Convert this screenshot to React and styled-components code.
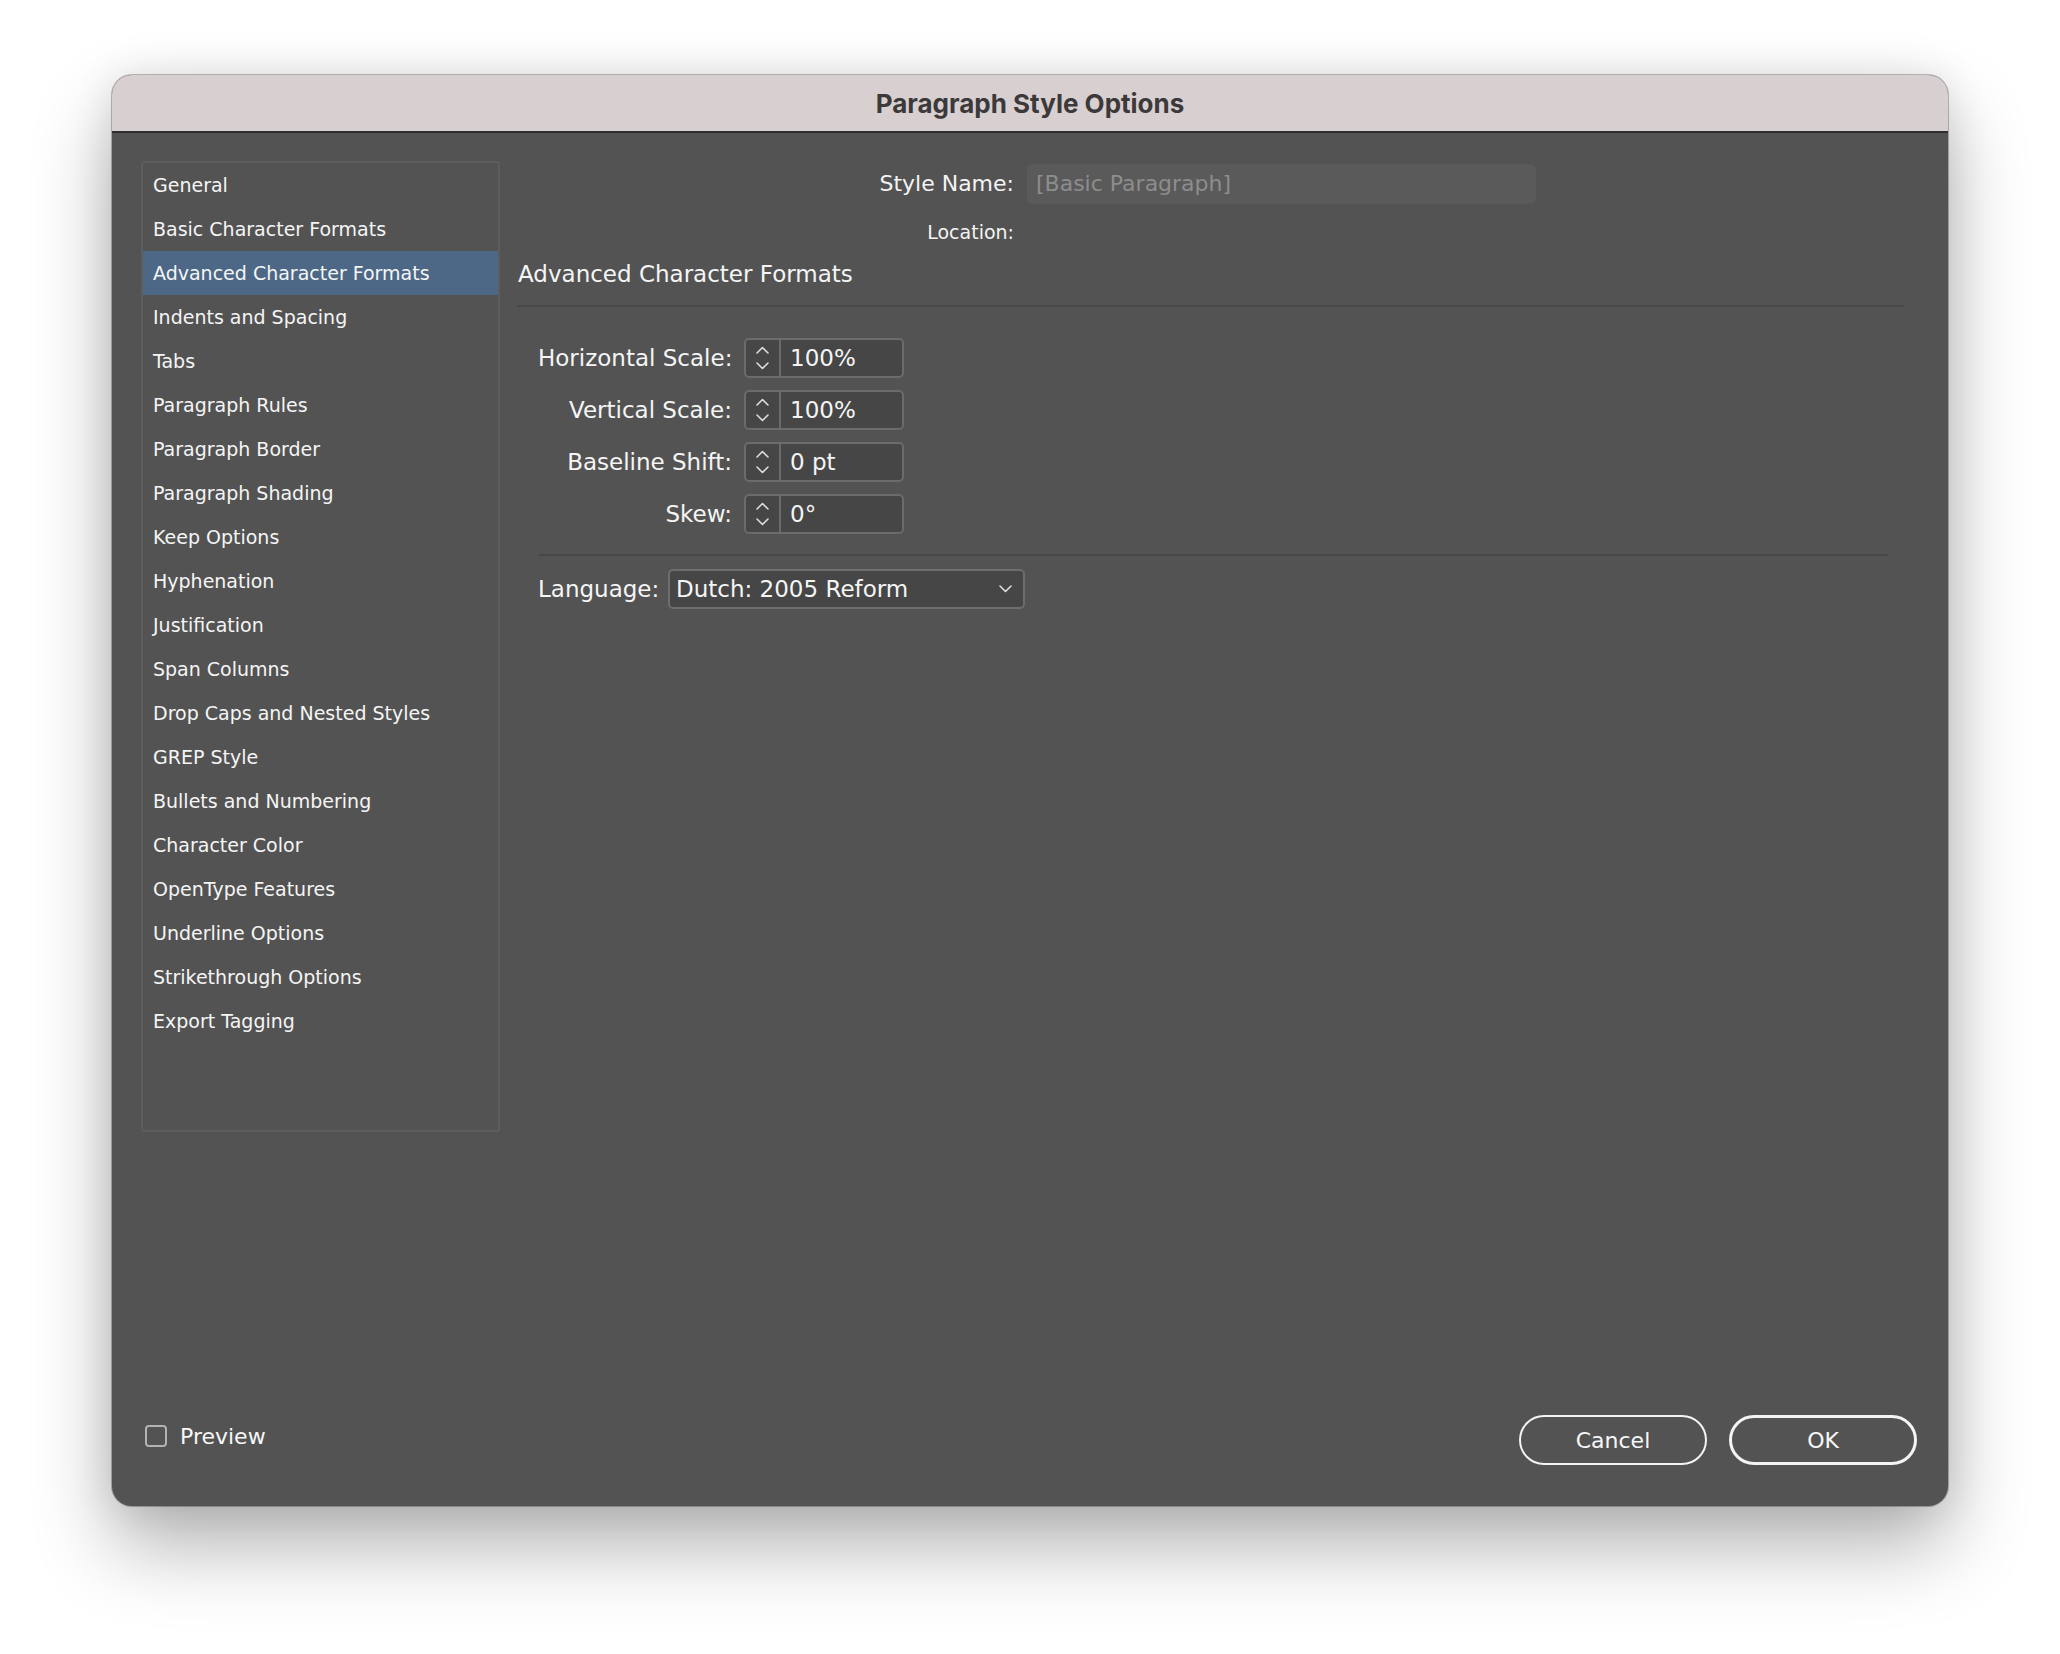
import React from 'react';
import styled, { createGlobalStyle } from 'styled-components';

const GlobalStyle = createGlobalStyle`
    html, body {
        margin: 0;
        padding: 0;
        background: #ffffff;
    }
    body {
        font-family: "DejaVu Sans", "Liberation Sans", sans-serif;
    }
`;

const Desktop = styled.div`
    min-height: 1654px;
    padding: 75px 0 0 112px;
    box-sizing: border-box;
    background: #ffffff;
`;

const Window = styled.div`
    width: 1836px;
    height: 1431px;
    border-radius: 20px;
    overflow: hidden;
    display: flex;
    flex-direction: column;
    background: #535353;
    box-shadow: 0 0 0 1px rgba(0, 0, 0, 0.25), 0 40px 80px rgba(0, 0, 0, 0.3), 0 0 40px rgba(0, 0, 0, 0.1);
`;

const TitleBar = styled.div`
    height: 56px;
    flex-shrink: 0;
    background: #d8cfd0;
    border-bottom: 2px solid #2f2f2f;
    display: flex;
    align-items: center;
    justify-content: center;
    font-family: Inter, "Liberation Sans", sans-serif;
    font-weight: 700;
    font-size: 26px;
    color: #3c393a;
`;

const Body = styled.div`
    flex: 1;
    display: flex;
    flex-direction: column;
    padding: 28px 31px 41px 29px;
`;

const Top = styled.div`
    display: flex;
    gap: 17px;
`;

const Sidebar = styled.ul`
    list-style: none;
    margin: 0;
    padding: 0;
    width: 359px;
    height: 971px;
    flex-shrink: 0;
    box-sizing: border-box;
    border: 2px solid #5d5d5d;
    border-radius: 3px;
`;

const NavItem = styled.li`
    height: 44px;
    line-height: 44px;
    padding-left: 10px;
    font-size: 19px;
    color: #f5f5f5;
    background: ${(p) => (p.$active ? '#4c6886' : 'transparent')};
    white-space: nowrap;
`;

const Main = styled.div`
    flex: 1;
    display: flex;
    flex-direction: column;
`;

const NameGrid = styled.div`
    display: grid;
    grid-template-columns: 497px 509px;
    column-gap: 13px;
    row-gap: 8px;
    margin-top: 3px;
`;

const NameLabel = styled.div`
    text-align: right;
    font-size: ${(p) => (p.$small ? '19px' : '22px')};
    color: #f3f3f3;
    height: 40px;
    line-height: 40px;
`;

const NameInput = styled.div`
    height: 40px;
    line-height: 40px;
    background: #5a5a5a;
    border-radius: 6px;
    padding-left: 9px;
    font-size: 22px;
    color: #8d8d8d;
`;

const Heading = styled.div`
    margin-top: 6px;
    padding-left: 1px;
    height: 32px;
    line-height: 32px;
    font-size: 23px;
    color: #f5f5f5;
`;

const Rule = styled.div`
    height: 2px;
    background: #484848;
    margin: ${(p) => p.$margin};
`;

const FieldGrid = styled.div`
    display: grid;
    grid-template-columns: 194px 160px;
    column-gap: 12px;
    row-gap: 12px;
    margin-top: 31px;
    padding-left: 21px;
    align-items: center;
`;

const FieldLabel = styled.div`
    text-align: ${(p) => (p.$left ? 'left' : 'right')};
    font-size: 23px;
    color: #f5f5f5;
    white-space: nowrap;
`;

const SpinBox = styled.div`
    display: flex;
    height: 40px;
    box-sizing: border-box;
    border: 2px solid #6b6b6b;
    border-radius: 5px;
    background: #464646;
`;

const Stepper = styled.div`
    width: 33px;
    flex-shrink: 0;
    border-right: 2px solid #6b6b6b;
    display: flex;
    flex-direction: column;
    align-items: center;
    justify-content: center;
    gap: 8px;
`;

const SpinValue = styled.div`
    padding-left: 9px;
    line-height: 36px;
    font-size: 23px;
    color: #f5f5f5;
`;

const LangRow = styled.div`
    display: grid;
    grid-template-columns: 130px 357px;
    margin-top: 13px;
    padding-left: 21px;
    align-items: center;
`;

const Select = styled.div`
    height: 40px;
    box-sizing: border-box;
    border: 2px solid #6d6d6d;
    border-radius: 5px;
    background: #464646;
    display: flex;
    align-items: center;
    justify-content: space-between;
    padding: 0 11px 0 6px;
    font-size: 23px;
    color: #f5f5f5;
`;

const Footer = styled.div`
    margin-top: auto;
    display: flex;
    align-items: center;
    height: 50px;
`;

const CheckBox = styled.span`
    width: 22px;
    height: 22px;
    box-sizing: border-box;
    border: 2px solid #b3b3b3;
    border-radius: 4px;
    margin-left: 4px;
    margin-top: -8px;
`;

const CheckLabel = styled.span`
    margin-left: 13px;
    margin-top: -8px;
    font-size: 22px;
    color: #f7f7f7;
`;

const Buttons = styled.div`
    margin-left: auto;
    display: flex;
    gap: 22px;
`;

const Button = styled.button`
    width: 188px;
    height: 50px;
    box-sizing: border-box;
    border-radius: 25px;
    border: ${(p) => (p.$primary ? '3.5px' : '2px')} solid #f4f4f4;
    background: transparent;
    color: #f7f7f7;
    font-family: "DejaVu Sans", sans-serif;
    font-size: 22px;
    padding: 0;
`;

const navItems = [
    'General',
    'Basic Character Formats',
    'Advanced Character Formats',
    'Indents and Spacing',
    'Tabs',
    'Paragraph Rules',
    'Paragraph Border',
    'Paragraph Shading',
    'Keep Options',
    'Hyphenation',
    'Justification',
    'Span Columns',
    'Drop Caps and Nested Styles',
    'GREP Style',
    'Bullets and Numbering',
    'Character Color',
    'OpenType Features',
    'Underline Options',
    'Strikethrough Options',
    'Export Tagging',
];

const fields = [
    ['Horizontal Scale:', '100%'],
    ['Vertical Scale:', '100%'],
    ['Baseline Shift:', '0 pt'],
    ['Skew:', '0°'],
];

const Chevron = ({ up }) => (
    <svg width="13" height="8" viewBox="0 0 13 8">
        <path
            d={up ? 'M1 7 L6.5 1.5 L12 7' : 'M1 1 L6.5 6.5 L12 1'}
            fill="none"
            stroke="#dcdcdc"
            strokeWidth="1.6"
            strokeLinecap="round"
            strokeLinejoin="round"
        />
    </svg>
);

const App = () => {
    return (
        <>
            <GlobalStyle />
            <Desktop>
                <Window>
                    <TitleBar>Paragraph Style Options</TitleBar>
                    <Body>
                        <Top>
                            <Sidebar>
                                {navItems.map((item) => (
                                    <NavItem key={item} $active={item === 'Advanced Character Formats'}>
                                        {item}
                                    </NavItem>
                                ))}
                            </Sidebar>
                            <Main>
                                <NameGrid>
                                    <NameLabel>Style Name:</NameLabel>
                                    <NameInput>[Basic Paragraph]</NameInput>
                                    <NameLabel $small>Location:</NameLabel>
                                    <div />
                                </NameGrid>
                                <Heading>Advanced Character Formats</Heading>
                                <Rule $margin="15px 13px 0 0" />
                                <FieldGrid>
                                    {fields.map(([label, value]) => (
                                        <React.Fragment key={label}>
                                            <FieldLabel>{label}</FieldLabel>
                                            <SpinBox>
                                                <Stepper>
                                                    <Chevron up />
                                                    <Chevron />
                                                </Stepper>
                                                <SpinValue>{value}</SpinValue>
                                            </SpinBox>
                                        </React.Fragment>
                                    ))}
                                </FieldGrid>
                                <Rule $margin="20px 29px 0 22px" />
                                <LangRow>
                                    <FieldLabel $left>Language:</FieldLabel>
                                    <Select>
                                        <span>Dutch: 2005 Reform</span>
                                        <Chevron />
                                    </Select>
                                </LangRow>
                            </Main>
                        </Top>
                        <Footer>
                            <CheckBox />
                            <CheckLabel>Preview</CheckLabel>
                            <Buttons>
                                <Button>Cancel</Button>
                                <Button $primary>OK</Button>
                            </Buttons>
                        </Footer>
                    </Body>
                </Window>
            </Desktop>
        </>
    );
};

export default App;
